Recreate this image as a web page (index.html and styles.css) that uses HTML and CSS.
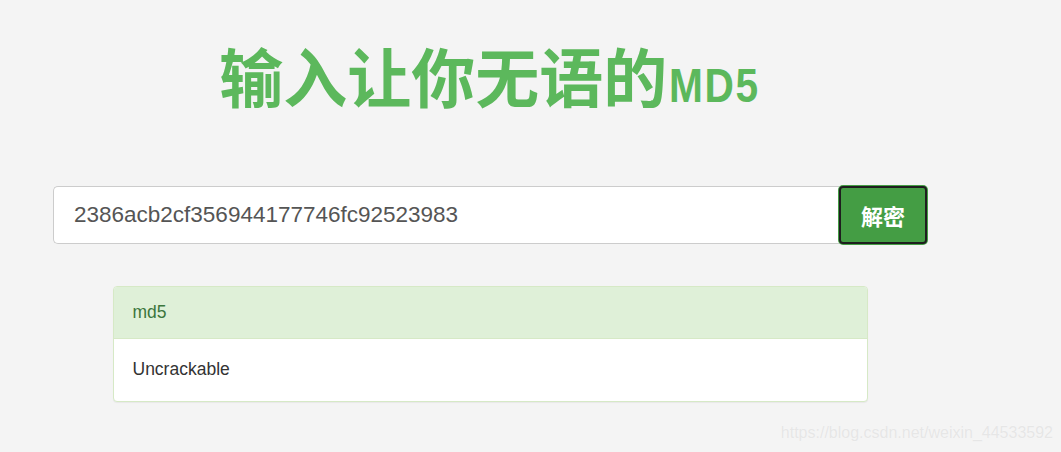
FILE: index.html
```html
<!DOCTYPE html>
<html lang="zh-CN">
<head>
  <meta charset="UTF-8">
  <meta name="viewport" content="width=device-width, initial-scale=1.0">
  <title>MD5解密</title>
  <link rel="stylesheet" href="styles.css">
</head>
<body>
  <div class="container">
    <h1 class="title">输入让你无语的<span class="title-latin">MD5</span></h1>

    <div class="search-group">
      <input type="text" class="search-input" value="2386acb2cf356944177746fc92523983">
      <button class="search-btn">解密</button>
    </div>

    <div class="panel">
      <div class="panel-heading">md5</div>
      <div class="panel-body">Uncrackable</div>
    </div>
  </div>

  <div class="watermark">https://blog.csdn.net/weixin_44533592</div>
</body>
</html>
```

FILE: styles.css
```css
body {
  margin: 0;
  padding: 0;
  background-color: #f4f4f4;
  font-family: "Liberation Sans", Arial, "Noto Sans CJK SC", sans-serif;
  color: #333;
  height: 452px;
  overflow: hidden;
  position: relative;
}

.container {
  width: 980px;
}

.title {
  margin: 0;
  padding-top: 39px;
  height: 186px;
  box-sizing: border-box;
  text-align: center;
  font-family: "Noto Sans CJK SC", sans-serif;
  font-size: 64px;
  line-height: 70px;
  font-weight: 700;
  color: #5cb85c;
}

/* 영문 부분은 좁은 글꼴처럼 보이도록 가로로 줄임 */
.title-latin {
  display: inline-block;
  font-family: "Liberation Sans", Arial, sans-serif;
  font-size: 49px;
  font-weight: 700;
  letter-spacing: 2px;
  margin-left: 2px;
  margin-right: -18px;
  transform: scaleX(0.83);
  transform-origin: left center;
}

.search-group {
  display: flex;
  width: 874px;
  height: 58px;
  margin: 0 auto;
}

.search-input {
  flex-grow: 1;
  min-width: 0;
  height: 58px;
  box-sizing: border-box;
  padding: 0 20px;
  font-family: "Liberation Sans", Arial, sans-serif;
  font-size: 22.5px;
  color: #555;
  background-color: white;
  border: 1px solid #ccc;
  border-right: none;
  border-radius: 5px 0 0 5px;
  outline: none;
}

.search-btn {
  width: 88px;
  height: 58px;
  box-sizing: border-box;
  padding: 0;
  background-color: #449d44;
  color: white;
  font-family: "Noto Sans CJK SC", sans-serif;
  font-size: 22px;
  font-weight: 700;
  border: 2px solid #1e1e1e;
  border-radius: 4px;
  box-shadow: 0 0 0 1px #449d44;
  cursor: pointer;
}

.panel {
  width: 753px;
  margin: 42px auto 0;
  background-color: white;
  border: 1px solid #d6e9c6;
  border-radius: 4px;
  box-shadow: 0 1px 1px rgba(0, 0, 0, 0.05);
  font-size: 17.5px;
}

.panel-heading {
  height: 51px;
  line-height: 51px;
  padding: 0 19px;
  background-color: #dff0d8;
  color: #3c763d;
  border-bottom: 1px solid #d6e9c6;
  border-radius: 3px 3px 0 0;
}

.panel-body {
  height: 62px;
  line-height: 60px;
  padding: 0 19px;
}

.watermark {
  position: absolute;
  right: 8px;
  bottom: 10px;
  font-size: 16px;
  color: #e6e6e6;
  text-shadow: 0 0 1px #fbfbfb;
}
```
